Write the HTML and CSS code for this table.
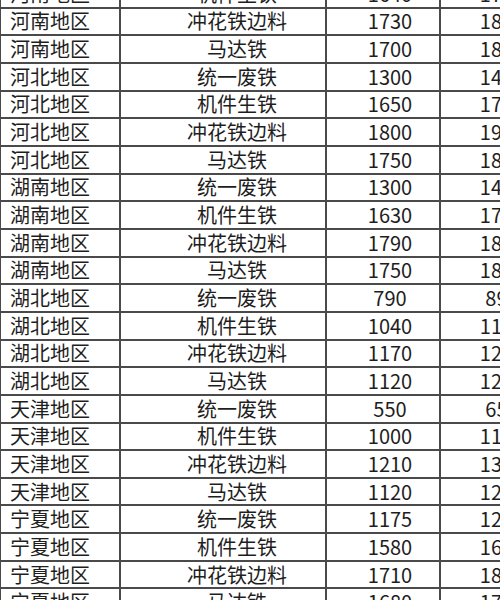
FILE: index.html
```html
<!DOCTYPE html>
<html lang="zh">
<head>
<meta charset="utf-8">
<link rel="stylesheet" href="styles.css">
</head>
<body>
<table class="sheet">
  <colgroup>
    <col class="c-region"><col class="c-type"><col class="c-price"><col class="c-next">
  </colgroup>
  <tbody>
    <tr><td>河南地区</td><td>机件生铁</td><td>1640</td><td>1740</td></tr>
    <tr><td>河南地区</td><td>冲花铁边料</td><td>1730</td><td>1830</td></tr>
    <tr><td>河南地区</td><td>马达铁</td><td>1700</td><td>1800</td></tr>
    <tr><td>河北地区</td><td>统一废铁</td><td>1300</td><td>1400</td></tr>
    <tr><td>河北地区</td><td>机件生铁</td><td>1650</td><td>1750</td></tr>
    <tr><td>河北地区</td><td>冲花铁边料</td><td>1800</td><td>1900</td></tr>
    <tr><td>河北地区</td><td>马达铁</td><td>1750</td><td>1850</td></tr>
    <tr><td>湖南地区</td><td>统一废铁</td><td>1300</td><td>1400</td></tr>
    <tr><td>湖南地区</td><td>机件生铁</td><td>1630</td><td>1730</td></tr>
    <tr><td>湖南地区</td><td>冲花铁边料</td><td>1790</td><td>1890</td></tr>
    <tr><td>湖南地区</td><td>马达铁</td><td>1750</td><td>1850</td></tr>
    <tr><td>湖北地区</td><td>统一废铁</td><td>790</td><td>890</td></tr>
    <tr><td>湖北地区</td><td>机件生铁</td><td>1040</td><td>1140</td></tr>
    <tr><td>湖北地区</td><td>冲花铁边料</td><td>1170</td><td>1270</td></tr>
    <tr><td>湖北地区</td><td>马达铁</td><td>1120</td><td>1220</td></tr>
    <tr><td>天津地区</td><td>统一废铁</td><td>550</td><td>650</td></tr>
    <tr><td>天津地区</td><td>机件生铁</td><td>1000</td><td>1100</td></tr>
    <tr><td>天津地区</td><td>冲花铁边料</td><td>1210</td><td>1310</td></tr>
    <tr><td>天津地区</td><td>马达铁</td><td>1120</td><td>1220</td></tr>
    <tr><td>宁夏地区</td><td>统一废铁</td><td>1175</td><td>1275</td></tr>
    <tr><td>宁夏地区</td><td>机件生铁</td><td>1580</td><td>1680</td></tr>
    <tr><td>宁夏地区</td><td>冲花铁边料</td><td>1710</td><td>1810</td></tr>
    <tr><td>宁夏地区</td><td>马达铁</td><td>1680</td><td>1780</td></tr>
  </tbody>
</table>
</body>
</html>
```
FILE: styles.css
```css
html, body {
  margin: 0;
  padding: 0;
  background: #ffffff;
  width: 500px;
  height: 600px;
  overflow: hidden;
}

.sheet {
  border-collapse: collapse;
  table-layout: fixed;
  width: 560px;
  margin-top: -21px;
  margin-left: -1px;
  font-family: "Noto Sans CJK SC", "Noto Sans", sans-serif;
  font-size: 20px;
  color: #1e1e1e;
}

.c-region { width: 120px; }
.c-type { width: 206px; }
.c-price { width: 114px; }
.c-next { width: 120px; }

.sheet td {
  border: 2px solid #4a4a4a;
  height: 27.67px;
  padding: 0;
  line-height: 24px;
  white-space: nowrap;
  overflow: hidden;
  text-align: center;
  box-sizing: border-box;
}

.sheet td:nth-child(1) {
  text-align: left;
  padding-left: 9px;
}

.sheet td:nth-child(2) {
  padding-left: 28px;
}

.sheet td:nth-child(3) {
  padding-left: 14px;
}

.sheet td:nth-child(4) {
  padding-left: 4px;
}
```
